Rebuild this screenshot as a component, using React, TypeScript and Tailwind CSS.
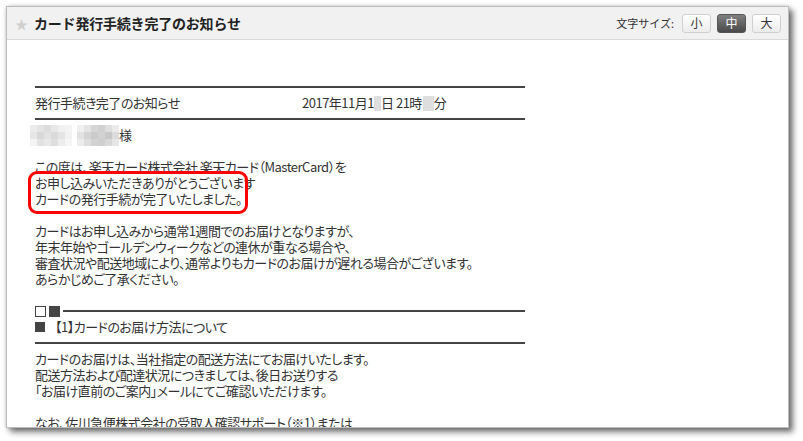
import React from 'react';

const font = "font-['Noto_Sans_CJK_JP','Noto_Sans',sans-serif]";

function Mosaic({ cells }: { cells: string[][] }) {
  return (
    <div className="flex flex-col">
      {cells.map((row, r) => (
        <div key={r} className="flex">
          {row.map((c, i) => (
            <div key={i} className="w-[7px] h-[7px]" style={{ background: c }} />
          ))}
        </div>
      ))}
    </div>
  );
}

const left = [
  ['#ececec', '#e4e4e4', '#dcdcdc', '#e8e8e8', '#f0f0f0', '#f4f4f4'],
  ['#e6e6e6', '#d8d8d8', '#e2e2e2', '#dadada', '#e4e4e4', '#f2f2f2'],
  ['#f4f4f4', '#e2e2e2', '#e8e8e8', '#dedede', '#ececec', '#f6f6f6'],
];
const right = [
  ['#f0f0f0', '#e4e4e4', '#d6d6d6', '#d0d0d0', '#dedede', '#ebebeb'],
  ['#e2e2e2', '#d4d4d4', '#cbcbcb', '#d2d2d2', '#c8c8c8', '#dcdcdc'],
  ['#ececec', '#dedede', '#d2d2d2', '#cfcfcf', '#d8d8d8', '#e6e6e6'],
];

function Rule() {
  return (
    <div className="h-4 flex items-center">
      <div className="h-[2px] w-full bg-[#444]" />
    </div>
  );
}

function Line({ children }: { children?: React.ReactNode }) {
  return <div className="h-4 leading-4 whitespace-nowrap">{children}</div>;
}

export default function App() {
  return (
    <div className={`w-[803px] h-[441px] bg-white p-[6px] ${font}`}>
      <div className="w-[783px] h-[422px] bg-white border border-[#bdbdbd] overflow-hidden shadow-[4px_4px_6px_rgba(0,0,0,0.55),0_0_4px_rgba(0,0,0,0.2)]">
        {/* header */}
        <div className="h-[33px] bg-[#f1f1f1] border-b border-[#d9d9d9] flex items-center pl-[8px] pr-[7px]">
          <span className="text-[13px] text-[#cfcfcf] w-[19px] leading-none">★</span>
          <h1 className="text-[14px] font-bold text-[#222] tracking-[-0.2px]">カード発行手続き完了のお知らせ</h1>
          <div className="ml-auto flex items-center gap-[6px]">
            <span className="text-[11px] text-[#333] mr-[2px]">文字サイズ:</span>
            <button className="w-[29px] h-[19px] rounded-[3px] border border-[#cfcfcf] bg-gradient-to-b from-white to-[#ececec] text-[12px] text-[#333] leading-none">小</button>
            <button className="w-[29px] h-[19px] rounded-[3px] border border-[#555] bg-gradient-to-b from-[#808080] to-[#4a4a4a] text-[12px] text-white leading-none">中</button>
            <button className="w-[29px] h-[19px] rounded-[3px] border border-[#cfcfcf] bg-gradient-to-b from-white to-[#ececec] text-[12px] text-[#333] leading-none">大</button>
          </div>
        </div>

        {/* body */}
        <div className="pl-[28px] pt-[39px] text-[13px] text-[#333] tracking-[-0.5px] [font-feature-settings:'palt']">
          <div className="w-[490px]">
            <Rule />
            <div className="h-4 leading-4 flex whitespace-nowrap">
              <span className="w-[267px]">発行手続き完了のお知らせ</span>
              <span className="flex items-center">
                2017年11月1<span className="inline-block w-[7px] h-[15px] bg-[#dedede]" />日 21時<span className="inline-block w-[11px] h-[15px] bg-[#dedede] ml-[1px]" />分
              </span>
            </div>
            <Rule />
            <div className="h-4 flex items-center ml-[-5px]">
              <div className="flex gap-[5px]">
                <Mosaic cells={left} />
                <Mosaic cells={right} />
              </div>
              <span className="leading-4">様</span>
            </div>
            <Line />
            <Line>この度は、楽天カード株式会社 楽天カード（MasterCard）を</Line>
            <div className="relative">
              <Line>お申し込みいただきありがとうございます</Line>
              <Line>カードの発行手続が完了いたしました。</Line>
              <div className="absolute left-[-7px] top-[-4px] w-[220px] h-[43px] border-[3px] border-[#f00] rounded-[9px]" />
            </div>
            <Line />
            <Line>カードはお申し込みから通常1週間でのお届けとなりますが、</Line>
            <Line>年末年始やゴールデンウィークなどの連休が重なる場合や、</Line>
            <Line>審査状況や配送地域により、通常よりもカードのお届けが遅れる場合がございます。</Line>
            <Line>あらかじめご了承ください。</Line>
            <Line />
            <div className="h-4 flex items-center">
              <span className="w-[11px] h-[11px] border border-[#444]" />
              <span className="w-[11px] h-[11px] bg-[#444] ml-[3px]" />
              <div className="flex-1 h-[2px] bg-[#444] ml-[3px]" />
            </div>
            <div className="h-4 flex items-center whitespace-nowrap">
              <span className="w-[10px] h-[10px] bg-[#444] mr-[10px]" />
              <span className="leading-4">【1】カードのお届け方法について</span>
            </div>
            <Rule />
            <Line>カードのお届けは、当社指定の配送方法にてお届けいたします。</Line>
            <Line>配送方法および配達状況につきましては、後日お送りする</Line>
            <Line>「お届け直前のご案内」メールにてご確認いただけます。</Line>
            <Line />
            <Line>なお、佐川急便株式会社の受取人確認サポート（※1）または</Line>
          </div>
        </div>
      </div>
    </div>
  );
}
